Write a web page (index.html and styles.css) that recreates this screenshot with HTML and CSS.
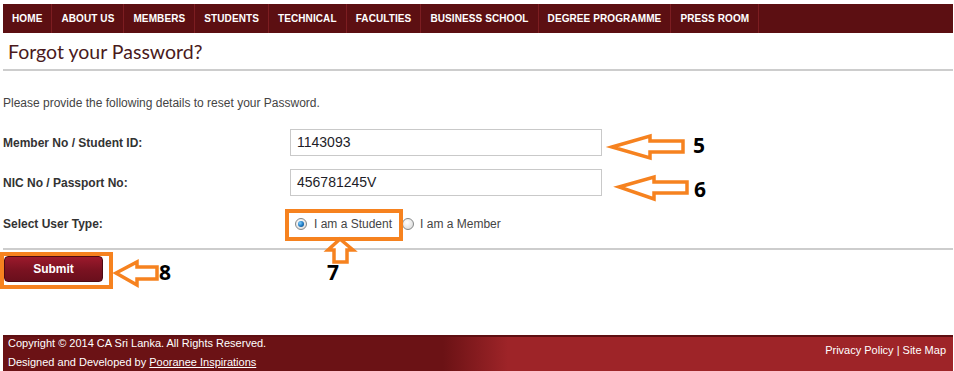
FILE: index.html
```html
<!DOCTYPE html>
<html>
<head>
<meta charset="utf-8">
<title>Forgot your Password?</title>
<link rel="stylesheet" href="styles.css">
</head>
<body>
<div class="page">
  <nav class="nav">
    <a class="nav-item">HOME</a>
    <a class="nav-item">ABOUT US</a>
    <a class="nav-item">MEMBERS</a>
    <a class="nav-item">STUDENTS</a>
    <a class="nav-item">TECHNICAL</a>
    <a class="nav-item">FACULTIES</a>
    <a class="nav-item">BUSINESS SCHOOL</a>
    <a class="nav-item">DEGREE PROGRAMME</a>
    <a class="nav-item">PRESS ROOM</a>
  </nav>
  <h1 class="title">Forgot your Password?</h1>
  <div class="rule"></div>
  <p class="intro">Please provide the following details to reset your Password.</p>
  <div class="form">
    <div class="row">
      <label class="label">Member No / Student ID:</label>
      <div class="field">1143093</div>
    </div>
    <div class="row">
      <label class="label">NIC No / Passport No:</label>
      <div class="field">456781245V</div>
    </div>
    <div class="row row-radio">
      <label class="label">Select User Type:</label>
      <div class="radios">
        <span class="radio checked"></span><span class="radio-text">I am a Student</span>
        <span class="radio"></span><span class="radio-text">I am a Member</span>
      </div>
    </div>
  </div>
  <div class="rule rule-bottom"></div>
  <div class="actions">
    <button class="submit">Submit</button>
  </div>
  <footer class="footer">
    <div class="footer-left">
      <div class="copy">Copyright © 2014 CA Sri Lanka. All Rights Reserved.</div>
      <div class="credit">Designed and Developed by <a class="credit-link">Pooranee Inspirations</a></div>
    </div>
    <div class="footer-right">Privacy Policy | Site Map</div>
  </footer>

  <svg class="annot" width="954" height="371" viewBox="0 0 954 371">
    <g class="arrow">
      <polygon points="612,147 650,136 650,141 683,141 683,152 650,152 650,158"/>
      <polygon points="619,187 654,177 654,182 687,182 687,193 654,193 654,199"/>
      <polygon points="340,239 353,250 347,250 347,262 334,262 334,250 328,250"/>
      <polygon points="116,273 137,262 137,267 157,267 157,279 137,279 137,285"/>
    </g>
    <rect class="hl" x="287" y="211" width="114" height="28"/>
    <rect class="hl" x="2" y="254" width="109" height="33"/>
    <text class="num" x="693" y="153">5</text>
    <text class="num" x="694" y="197">6</text>
    <text class="num" x="327" y="280">7</text>
    <text class="num" x="159" y="280">8</text>
  </svg>
</div>
</body>
</html>
```
FILE: styles.css
```css
* { box-sizing: border-box; }
html, body { margin: 0; padding: 0; background: #fff; }
body { font-family: "Liberation Sans", Arial, sans-serif; color: #333; }

.page {
  position: relative;
  width: 954px;
  height: 371px;
  padding: 4px 1px 0 3px;
  overflow: hidden;
}

.nav {
  display: flex;
  height: 29px;
  background: #5c0f12;
}
.nav-item {
  display: flex;
  align-items: center;
  padding: 0 9px;
  border-right: 1px solid #7c1d21;
  color: #fff;
  font-weight: bold;
  font-size: 10px;
  letter-spacing: 0.1px;
  white-space: nowrap;
}

.title {
  margin: 0;
  height: 36px;
  padding-left: 5px;
  font-family: "Lato", "Open Sans", sans-serif;
  font-weight: 400;
  font-size: 19.5px;
  line-height: 37px;
  color: #4a1a1c;
}

.rule { height: 2px; background: #cdcdcd; }

.intro {
  margin: 25px 0 0 0;
  font-size: 12px;
  line-height: 15px;
  color: #444;
}

.form { margin-top: 18px; }
.row {
  display: grid;
  grid-template-columns: 287px 312px;
  align-items: center;
  height: 27px;
  margin-bottom: 13px;
}
.row-radio { height: 20px; margin-top: 18px; margin-bottom: 0; }
.label { font-size: 12px; font-weight: bold; color: #333; }
.field {
  height: 27px;
  border: 1px solid #c9c9c9;
  padding-left: 6px;
  font-size: 14px;
  line-height: 25px;
  color: #1d1d28;
}

.radios { display: flex; align-items: center; font-size: 12px; color: #444; }
.radio {
  width: 12px; height: 12px;
  border-radius: 50%;
  border: 1px solid #858787;
  background: radial-gradient(circle at 40% 35%, #ffffff 0, #e2e2e2 70%, #cfcfcf 100%);
  margin-left: 5px;
  margin-right: 7px;
  position: relative;
}
.radio.checked::after {
  content: "";
  position: absolute;
  left: 2px; top: 2px;
  width: 6px; height: 6px;
  border-radius: 50%;
  background: radial-gradient(circle at 35% 35%, #7fd0ff 0, #1b76c0 55%, #0b3f6e 100%);
}
.radio-text + .radio { margin-left: 10px; margin-right: 6px; }

.rule-bottom { margin-top: 14px; }

.actions { padding: 6px 0 0 1px; }
.submit {
  width: 99px;
  height: 26px;
  border: 1px solid #4e0a12;
  border-radius: 4px;
  background: linear-gradient(#9c1a2c, #7a1221 55%, #6a0f1c);
  color: #fff;
  font-family: "Liberation Sans", Arial, sans-serif;
  font-weight: bold;
  font-size: 12px;
  padding: 0;
  display: block;
}

.footer {
  margin-top: 53px;
  height: 37px;
  display: flex;
  justify-content: space-between;
  border-top: 2px solid #5e0f12;
  background: linear-gradient(to right, #6b1215 0, #6b1215 440px, #9e2428 505px, #9e2428 100%);
  color: #fff;
  font-size: 11px;
  padding: 0 7px 0 5px;
}
.copy { line-height: 12px; margin-top: 0; }
.credit { line-height: 12px; margin-top: 7px; }
.credit-link { color: #fff; text-decoration: underline; }
.footer-right { padding-top: 7px; line-height: 12px; }

.annot { position: absolute; left: 0; top: 0; pointer-events: none; }
.arrow polygon { fill: #fff; stroke: #f6821f; stroke-width: 3.5; stroke-linejoin: miter; }
.hl { fill: none; stroke: #f6821f; stroke-width: 4; }
.num { font-family: "Open Sans", "Liberation Sans", sans-serif; font-weight: bold; font-size: 21px; fill: #000; }
```
